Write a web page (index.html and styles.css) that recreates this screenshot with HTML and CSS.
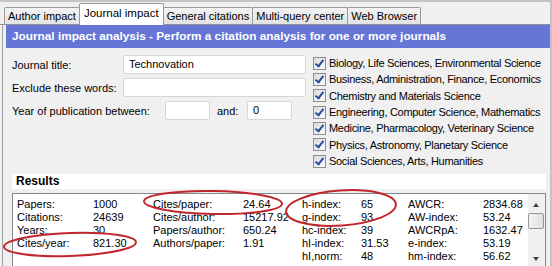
FILE: index.html
```html
<!DOCTYPE html>
<html lang="en">
<head>
    <meta charset="UTF-8">
    <title>Journal impact</title>
    <link rel="stylesheet" href="styles.css">
</head>
<body>
    <div class="window">
        <div class="tabs">
            <div class="tab">Author impact</div>
            <div class="tab active">Journal impact</div>
            <div class="tab">General citations</div>
            <div class="tab">Multi-query center</div>
            <div class="tab">Web Browser</div>
        </div>

        <div class="panel">
            <div class="banner">Journal impact analysis - Perform a citation analysis for one or more journals</div>

            <div class="query">
                <div class="fields">
                    <div class="row">
                        <span class="label">Journal title:</span>
                        <div class="input wide">Technovation</div>
                    </div>
                    <div class="row">
                        <span class="label">Exclude these words:</span>
                        <div class="input wide"></div>
                    </div>
                    <div class="row">
                        <span class="label year">Year of publication between:</span>
                        <div class="input short"></div>
                        <span class="and">and:</span>
                        <div class="input short">0</div>
                    </div>
                </div>

                <ul class="subjects">
                    <li><span class="check"></span>Biology, Life Sciences, Environmental Science</li>
                    <li><span class="check"></span>Business, Administration, Finance, Economics</li>
                    <li><span class="check"></span>Chemistry and Materials Science</li>
                    <li><span class="check"></span>Engineering, Computer Science, Mathematics</li>
                    <li><span class="check"></span>Medicine, Pharmacology, Veterinary Science</li>
                    <li><span class="check"></span>Physics, Astronomy, Planetary Science</li>
                    <li><span class="check"></span>Social Sciences, Arts, Humanities</li>
                </ul>
            </div>

            <div class="results">
                <div class="results-head">Results</div>
                <div class="list">
                    <div class="grid">
                        <span>Papers:</span><span>1000</span><span>Cites/paper:</span><span>24.64</span>
                        <span>h-index:</span><span>65</span><span>AWCR:</span><span>2834.68</span>

                        <span>Citations:</span><span>24639</span><span>Cites/author:</span><span>15217.92</span>
                        <span>g-index:</span><span>93</span><span>AW-index:</span><span>53.24</span>

                        <span>Years:</span><span>30</span><span>Papers/author:</span><span>650.24</span>
                        <span>hc-index:</span><span>39</span><span>AWCRpA:</span><span>1632.47</span>

                        <span>Cites/year:</span><span>821.30</span><span>Authors/paper:</span><span>1.91</span>
                        <span>hI-index:</span><span>31.53</span><span>e-index:</span><span>53.19</span>

                        <span></span><span></span><span></span><span></span>
                        <span>hI,norm:</span><span>48</span><span>hm-index:</span><span>56.62</span>
                    </div>
                    <div class="scrollbar">
                        <div class="arrow up"></div>
                        <div class="thumb"></div>
                        <div class="track"></div>
                        <div class="arrow down"></div>
                    </div>
                </div>
            </div>
        </div>

        <!-- hand-drawn red rings over the results -->
        <svg class="marks" width="552" height="266" viewBox="0 0 552 266">
            <ellipse cx="70" cy="244.5" rx="66" ry="11.5" transform="rotate(-2 70 244.5)"/>
            <ellipse cx="213" cy="202.5" rx="69" ry="11.5" transform="rotate(1 213 202.5)"/>
            <ellipse cx="341" cy="208" rx="55" ry="17.5" transform="rotate(-4 341 208)"/>
        </svg>
    </div>
</body>
</html>
```

FILE: styles.css
```css
body {
    margin: 0;
    background: #f0f0f0;
    font-family: 'Liberation Sans', Arial, sans-serif;
    font-size: 11px;
    color: #000;
    overflow: hidden;
}

.window {
    position: relative;
    height: 264px;
    border-top: 2px solid #c4c4c4;
    border-right: 2px solid #c4c4c4;
}

/* tab strip */
.tabs {
    display: flex;
    align-items: flex-end;
    height: 22px;
    padding-left: 4px;
    border-bottom: 1px solid #8e8f9a;
}

.tab {
    height: 16px;
    line-height: 16px;
    padding: 0 3px;
    border: 1px solid #9a9a9a;
    border-bottom: none;
    border-radius: 2px 2px 0 0;
    background: linear-gradient(#f3f3f3, #e3e3e3);
    margin-right: -1px;
    white-space: nowrap;
}

.tab.active {
    position: relative;
    height: 21px;
    line-height: 19px;
    padding: 0 4px;
    margin-bottom: -1px;
    background: #fff;
    font-size: 11.5px;
    z-index: 1;
}

/* main panel */
.panel {
    margin-left: 2px;
    border-left: 1px solid #a0a0a0;
    padding-left: 3px;
    height: 241px;
}

.banner {
    height: 23px;
    line-height: 23px;
    padding-left: 6px;
    background: #6576d6;
    color: #fff;
    font-weight: bold;
    font-size: 11.8px;
    white-space: nowrap;
}

.query {
    display: flex;
    height: 119px;
    padding: 7px 0 0 6px;
}

.fields {
    width: 301px;
    flex-shrink: 0;
}

.row {
    display: flex;
    align-items: center;
    height: 19px;
    margin-bottom: 4px;
}

.label {
    width: 111px;
}

.label.year {
    width: 153px;
}

.input {
    box-sizing: border-box;
    height: 19px;
    line-height: 17px;
    padding-left: 5px;
    background: #fff;
    border: 1px solid #d6d6d6;
    border-radius: 2px;
}

.input.wide {
    width: 183px;
}

.input.short {
    width: 45px;
}

.and {
    width: 37px;
    padding-left: 7px;
    box-sizing: border-box;
}

.subjects {
    list-style: none;
    margin: 0;
    padding: 0;
    letter-spacing: -0.3px;
    white-space: nowrap;
}

.subjects li {
    display: flex;
    align-items: center;
    height: 16.33px;
}

.check {
    position: relative;
    box-sizing: border-box;
    width: 13px;
    height: 13px;
    margin-right: 3px;
    border: 1px solid #8e8f8f;
    background: linear-gradient(135deg, #dcdcdc, #fafafa);
    flex-shrink: 0;
}

.check::after {
    content: "";
    position: absolute;
    left: 3px;
    top: 0;
    width: 3px;
    height: 7px;
    border: solid #2b4a9e;
    border-width: 0 2px 2px 0;
    transform: rotate(38deg);
}

/* results box */
.results {
    margin: 0 4px 0 6px;
}

.results-head {
    height: 15px;
    line-height: 15px;
    padding-left: 4px;
    background: #fff;
    font-weight: bold;
    font-size: 12px;
    margin-bottom: 4px;
}

.list {
    display: flex;
    height: 74px;
    border: 1px solid #828790;
    background: #fff;
}

.grid {
    flex: 1;
    display: grid;
    grid-template-columns: 76px 60px 90px 59px 59px 47px 75px auto;
    grid-auto-rows: 13px;
    line-height: 13px;
    padding: 4px 0 0 4px;
}

.scrollbar {
    width: 17px;
    display: flex;
    flex-direction: column;
    background: #f0f0f0;
}

.arrow {
    height: 17px;
    position: relative;
}

.arrow::after {
    content: "";
    position: absolute;
    left: 5px;
    border-left: 3.5px solid transparent;
    border-right: 3.5px solid transparent;
}

.arrow.up::after {
    top: 9px;
    border-bottom: 4px solid #404040;
}

.arrow.down::after {
    top: 6px;
    border-top: 4px solid #404040;
}

.thumb {
    height: 14px;
    margin: 2px 1px 0 0;
    border: 1px solid #979797;
    border-radius: 2px;
    background: linear-gradient(90deg, #f2f2f2, #e0e0e0);
}

.track {
    flex: 1;
}

.marks {
    position: absolute;
    top: -2px;
    left: 0;
    pointer-events: none;
}

.marks ellipse {
    fill: none;
    stroke: #c0262a;
    stroke-width: 2;
}
```
